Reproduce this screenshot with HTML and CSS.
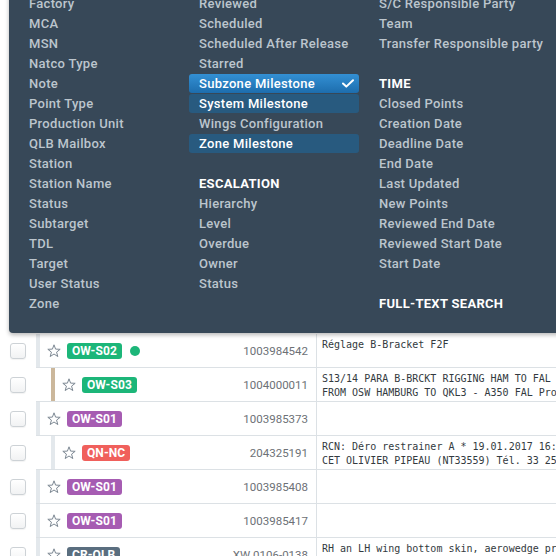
FILE: index.html
```html
<!DOCTYPE html>
<html lang="en">
<head>
<meta charset="utf-8">
<title>Points</title>
<link rel="stylesheet" href="styles.css">
</head>
<body>
<div class="page">
  <div class="toolbar-space"></div>

  <div class="list">
    <div class="row">
      <div class="check"><span class="box"></span></div>
      <div class="main">
        <div class="lead">
          <span class="strip"></span>
          <svg class="star" viewBox="0 0 14 14"><polygon points="7,0.8 8.59,5.12 13.18,5.29 9.57,8.13 10.82,12.56 7,10 3.18,12.56 4.43,8.13 0.82,5.29 5.41,5.12"/></svg>
          <span class="badge green">OW-S02</span>
          <span class="dot"></span>
          <span class="num">1003984542</span>
        </div>
        <div class="desc">Réglage B-Bracket F2F</div>
      </div>
    </div>

    <div class="row child">
      <div class="check"><span class="box"></span></div>
      <div class="main">
        <div class="lead">
          <span class="strip tan"></span>
          <svg class="star" viewBox="0 0 14 14"><polygon points="7,0.8 8.59,5.12 13.18,5.29 9.57,8.13 10.82,12.56 7,10 3.18,12.56 4.43,8.13 0.82,5.29 5.41,5.12"/></svg>
          <span class="badge green">OW-S03</span>
          <span class="num">1004000011</span>
        </div>
        <div class="desc">S13/14 PARA B-BRCKT RIGGING HAM TO FAL<br>FROM OSW HAMBURG TO QKL3 - A350 FAL Pro</div>
      </div>
    </div>

    <div class="row">
      <div class="check"><span class="box"></span></div>
      <div class="main">
        <div class="lead">
          <span class="strip"></span>
          <svg class="star" viewBox="0 0 14 14"><polygon points="7,0.8 8.59,5.12 13.18,5.29 9.57,8.13 10.82,12.56 7,10 3.18,12.56 4.43,8.13 0.82,5.29 5.41,5.12"/></svg>
          <span class="badge purple">OW-S01</span>
          <span class="num">1003985373</span>
        </div>
        <div class="desc"></div>
      </div>
    </div>

    <div class="row child">
      <div class="check"><span class="box"></span></div>
      <div class="main">
        <div class="lead">
          <span class="strip"></span>
          <svg class="star" viewBox="0 0 14 14"><polygon points="7,0.8 8.59,5.12 13.18,5.29 9.57,8.13 10.82,12.56 7,10 3.18,12.56 4.43,8.13 0.82,5.29 5.41,5.12"/></svg>
          <span class="badge red">QN-NC</span>
          <span class="num">204325191</span>
        </div>
        <div class="desc">RCN: Déro restrainer A * 19.01.2017 16:<br>CET OLIVIER PIPEAU (NT33559) Tél. 33 25</div>
      </div>
    </div>

    <div class="row">
      <div class="check"><span class="box"></span></div>
      <div class="main">
        <div class="lead">
          <span class="strip"></span>
          <svg class="star" viewBox="0 0 14 14"><polygon points="7,0.8 8.59,5.12 13.18,5.29 9.57,8.13 10.82,12.56 7,10 3.18,12.56 4.43,8.13 0.82,5.29 5.41,5.12"/></svg>
          <span class="badge purple">OW-S01</span>
          <span class="num">1003985408</span>
        </div>
        <div class="desc"></div>
      </div>
    </div>

    <div class="row">
      <div class="check"><span class="box"></span></div>
      <div class="main">
        <div class="lead">
          <span class="strip"></span>
          <svg class="star" viewBox="0 0 14 14"><polygon points="7,0.8 8.59,5.12 13.18,5.29 9.57,8.13 10.82,12.56 7,10 3.18,12.56 4.43,8.13 0.82,5.29 5.41,5.12"/></svg>
          <span class="badge purple">OW-S01</span>
          <span class="num">1003985417</span>
        </div>
        <div class="desc"></div>
      </div>
    </div>

    <div class="row">
      <div class="check"><span class="box"></span></div>
      <div class="main">
        <div class="lead">
          <span class="strip"></span>
          <svg class="star" viewBox="0 0 14 14"><polygon points="7,0.8 8.59,5.12 13.18,5.29 9.57,8.13 10.82,12.56 7,10 3.18,12.56 4.43,8.13 0.82,5.29 5.41,5.12"/></svg>
          <span class="badge slate">CR-QLB</span>
          <span class="num">XW 0106-0138</span>
        </div>
        <div class="desc">RH an LH wing bottom skin, aerowedge pr</div>
      </div>
    </div>
  </div>

  <div class="filter-panel">
    <div class="col">
      <div class="opt">Factory</div>
      <div class="opt">MCA</div>
      <div class="opt">MSN</div>
      <div class="opt">Natco Type</div>
      <div class="opt">Note</div>
      <div class="opt">Point Type</div>
      <div class="opt">Production Unit</div>
      <div class="opt">QLB Mailbox</div>
      <div class="opt">Station</div>
      <div class="opt">Station Name</div>
      <div class="opt">Status</div>
      <div class="opt">Subtarget</div>
      <div class="opt">TDL</div>
      <div class="opt">Target</div>
      <div class="opt">User Status</div>
      <div class="opt">Zone</div>
    </div>
    <div class="col">
      <div class="opt">Reviewed</div>
      <div class="opt">Scheduled</div>
      <div class="opt">Scheduled After Release</div>
      <div class="opt">Starred</div>
      <div class="opt sel"><span>Subzone Milestone</span><svg class="tick" viewBox="0 0 12 9"><polyline points="1,4.5 4.3,7.6 11,1.2"/></svg></div>
      <div class="opt on">System Milestone</div>
      <div class="opt">Wings Configuration</div>
      <div class="opt on">Zone Milestone</div>
      <div class="opt"></div>
      <div class="opt head">ESCALATION</div>
      <div class="opt">Hierarchy</div>
      <div class="opt">Level</div>
      <div class="opt">Overdue</div>
      <div class="opt">Owner</div>
      <div class="opt">Status</div>
    </div>
    <div class="col wide">
      <div class="opt">S/C Responsible Party</div>
      <div class="opt">Team</div>
      <div class="opt">Transfer Responsible party</div>
      <div class="opt"></div>
      <div class="opt head">TIME</div>
      <div class="opt">Closed Points</div>
      <div class="opt">Creation Date</div>
      <div class="opt">Deadline Date</div>
      <div class="opt">End Date</div>
      <div class="opt">Last Updated</div>
      <div class="opt">New Points</div>
      <div class="opt">Reviewed End Date</div>
      <div class="opt">Reviewed Start Date</div>
      <div class="opt">Start Date</div>
      <div class="opt"></div>
      <div class="opt head">FULL-TEXT SEARCH</div>
    </div>
  </div>
</div>
</body>
</html>
```

FILE: styles.css
```css
html, body {
  margin: 0;
  padding: 0;
  overflow: hidden;
  background: #ffffff;
}

body {
  font-family: Roboto, "Liberation Sans", sans-serif;
}

.page {
  position: relative;
  width: 556px;
  height: 556px;
  overflow: hidden;
}

.toolbar-space {
  height: 334px;
}

/* ---------- table rows ---------- */
.row {
  display: flex;
  height: 34px;
}

.check {
  width: 36px;
  flex: none;
  display: flex;
  align-items: center;
}

.box {
  width: 14px;
  height: 14px;
  margin-left: 10px;
  border: 1px solid #cdd2d6;
  border-radius: 3px;
  background: linear-gradient(#ffffff, #f1f2f3);
  box-shadow: 0 1px 1px rgba(0, 0, 0, 0.05);
}

.main {
  flex: 1;
  min-width: 0;
  display: flex;
  border-bottom: 1px solid #dce1e5;
}

.lead {
  width: 280px;
  flex: none;
  display: flex;
  align-items: center;
  height: 33px;
}

.strip {
  align-self: stretch;
  width: 4px;
  background: #e3e8ec;
  margin-right: 7px;
}

.child .strip {
  margin-left: 15px;
}

.strip.tan {
  background: #cbb79b;
}

.star {
  width: 14px;
  height: 14px;
  fill: none;
  stroke: #7d8893;
  stroke-width: 1;
  stroke-linejoin: round;
  margin-right: 6px;
}

.badge {
  height: 16px;
  line-height: 16px;
  padding: 0 5px;
  border-radius: 3px;
  color: #ffffff;
  font-size: 12px;
  font-weight: 700;
  letter-spacing: 0.1px;
}

.green { background: #1cb679; }
.purple { background: #a65cb2; }
.red { background: #f0605c; }
.slate { background: #5a6e7f; }

.dot {
  width: 10px;
  height: 10px;
  border-radius: 50%;
  background: #1cb679;
  margin-left: 8px;
}

.num {
  margin-left: auto;
  padding-right: 8px;
  font-size: 11.5px;
  color: #6d7176;
}

.desc {
  flex: 1;
  min-width: 0;
  border-left: 1px solid #dce1e5;
  padding: 4px 0 0 5px;
  font-family: "DejaVu Sans Mono", "Liberation Mono", monospace;
  font-size: 10px;
  line-height: 14px;
  color: #333a40;
  white-space: nowrap;
  overflow: hidden;
}

/* ---------- filter dropdown ---------- */
.filter-panel {
  position: absolute;
  left: 9px;
  top: -6px;
  right: -20px;
  padding: 0 0 19px 10px;
  background: #374858;
  border-radius: 0 0 0 4px;
  box-shadow: 0 2px 4px rgba(0, 0, 0, 0.28);
  display: grid;
  grid-template-columns: 170px 170px 1fr;
}

.col.wide {
  margin-left: 10px;
}

.opt {
  height: 19px;
  margin-bottom: 1px;
  line-height: 19px;
  padding: 0 10px;
  border-radius: 3px;
  font-size: 13px;
  font-weight: 500;
  letter-spacing: 0.3px;
  color: #bcc5cd;
  white-space: nowrap;
}

.opt.head {
  color: #ffffff;
  font-weight: 700;
}

.opt.sel {
  display: flex;
  align-items: center;
  justify-content: space-between;
  padding-right: 5px;
  background: linear-gradient(#3390d4, #1d6dad);
  color: #ffffff;
}

.opt.on {
  background: #285a7f;
  color: #ffffff;
}

.tick {
  width: 12px;
  height: 9px;
  fill: none;
  stroke: #ffffff;
  stroke-width: 2;
  stroke-linecap: round;
  stroke-linejoin: round;
}
```
